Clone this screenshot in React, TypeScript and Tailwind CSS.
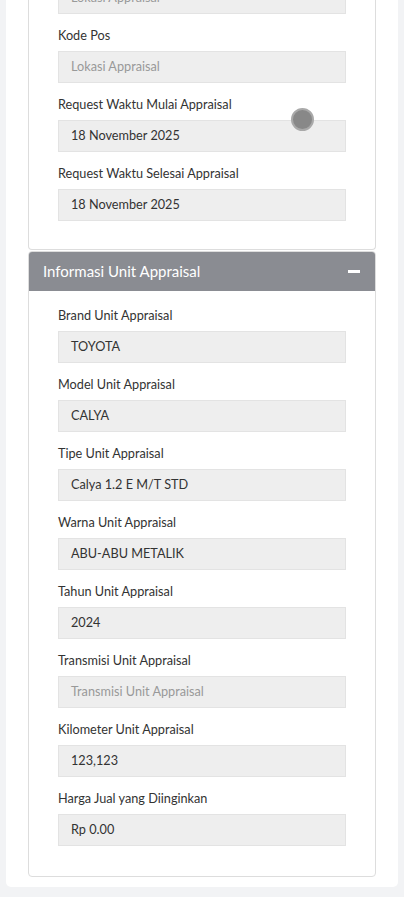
import React from "react";

type F = { label: string; value: string; placeholder?: boolean };

function Field({ label, value, placeholder }: F) {
  return (
    <div className="mb-[12px]">
      <div className="text-[12.7px] leading-[18px] text-[#333333] mb-[7px]">{label}</div>
      <div
        className={`h-[32px] border border-[#e3e3e3] bg-[#eeeeee] px-[12px] flex items-center text-[12.7px] ${
          placeholder ? "text-[#999999]" : "text-[#333333]"
        }`}
      >
        {value}
      </div>
    </div>
  );
}

export default function App() {
  const card1: F[] = [
    { label: "Kode Pos", value: "Lokasi Appraisal", placeholder: true },
    { label: "Request Waktu Mulai Appraisal", value: "18 November 2025" },
    { label: "Request Waktu Selesai Appraisal", value: "18 November 2025" },
  ];
  const card2: F[] = [
    { label: "Brand Unit Appraisal", value: "TOYOTA" },
    { label: "Model Unit Appraisal", value: "CALYA" },
    { label: "Tipe Unit Appraisal", value: "Calya 1.2 E M/T STD" },
    { label: "Warna Unit Appraisal", value: "ABU-ABU METALIK" },
    { label: "Tahun Unit Appraisal", value: "2024" },
    { label: "Transmisi Unit Appraisal", value: "Transmisi Unit Appraisal", placeholder: true },
    { label: "Kilometer Unit Appraisal", value: "123,123" },
    { label: "Harga Jual yang Diinginkan", value: "Rp 0.00" },
  ];
  return (
    <div
      className="relative min-h-[897px] bg-[#f2f3f5] px-[6px] overflow-hidden"
      style={{ fontFamily: "Lato, 'Open Sans', sans-serif" }}
    >
      <div className="bg-white rounded-b-[5px] px-[22px] pb-[10px] -mt-[18px]">
        <div className="border border-[#dddddd] border-t-0 rounded-b-[4px] px-[29px] pb-[16px]">
          <div className="mb-[12px]">
            <div className="h-[32px] border border-[#e3e3e3] bg-[#eeeeee] px-[12px] flex items-center text-[12.7px] text-[#999999]">
              Lokasi Appraisal
            </div>
          </div>
          {card1.map((f) => (
            <Field key={f.label} {...f} />
          ))}
        </div>
        <div className="mt-[1px] border border-[#dddddd] rounded-[4px] overflow-hidden">
          <div className="h-[39px] bg-[#8a8c92] flex items-center justify-between pl-[14px] pr-[15px]">
            <span className="text-white text-[15px]">Informasi Unit Appraisal</span>
            <span className="block w-[12px] h-[3px] bg-white" />
          </div>
          <div className="px-[29px] pt-[15px] pb-[18px]">
            {card2.map((f) => (
              <Field key={f.label} {...f} />
            ))}
          </div>
        </div>
      </div>
      <div className="absolute left-[291px] top-[108px] w-[23px] h-[23px] rounded-full bg-[#888888] border-[2px] border-[#a9a9a9]" />
    </div>
  );
}
